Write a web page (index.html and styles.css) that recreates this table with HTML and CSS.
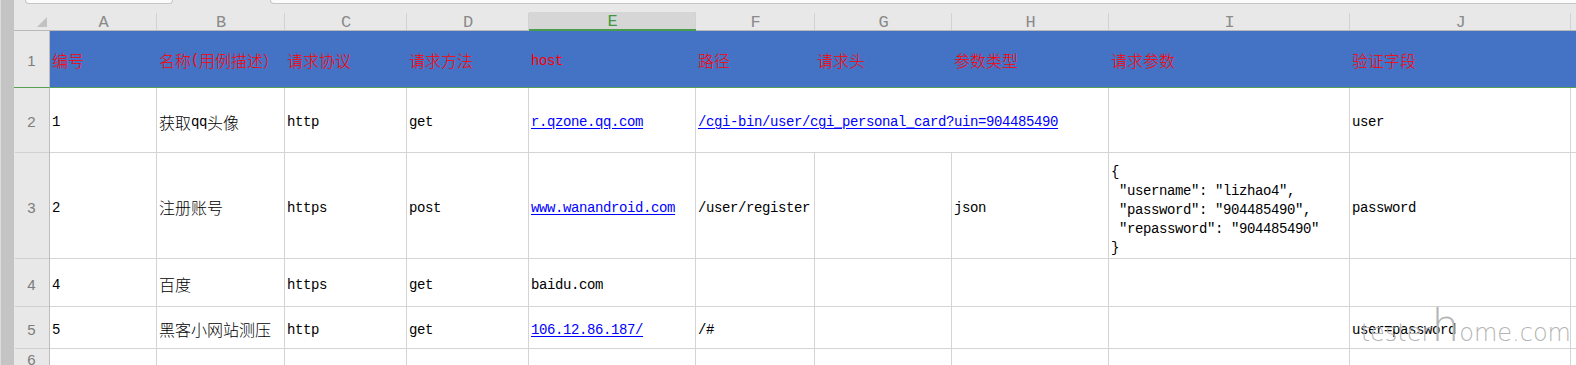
FILE: index.html
```html
<!DOCTYPE html>
<html lang="zh-CN">
<head>
<meta charset="utf-8">
<title>接口用例表</title>
<link rel="stylesheet" href="styles.css">
</head>
<body>
<div class="app">
  <div class="strip"></div>
  <div class="main">
    <div class="topbar"><div class="box b1"></div><div class="box b2"></div></div>
    <div class="sheet">
      <!-- column headers -->
      <div class="ch corner"><svg width="10" height="10" viewBox="0 0 10 10"><polygon points="10,0 10,10 0,10" fill="#c2c2c2"/></svg></div>
      <div class="ch">A</div>
      <div class="ch">B</div>
      <div class="ch">C</div>
      <div class="ch">D</div>
      <div class="ch sel">E</div>
      <div class="ch">F</div>
      <div class="ch">G</div>
      <div class="ch">H</div>
      <div class="ch">I</div>
      <div class="ch">J</div>
      <div class="ch"></div>

      <!-- row 1 -->
      <div class="rh r1">1</div>
      <div class="hd">编号</div>
      <div class="hd">名称<span class="m">(</span>用例描述）</div>
      <div class="hd">请求协议</div>
      <div class="hd">请求方法</div>
      <div class="hd m">host</div>
      <div class="hd">路径</div>
      <div class="hd">请求头</div>
      <div class="hd">参数类型</div>
      <div class="hd">请求参数</div>
      <div class="hd">验证字段</div>
      <div class="hd"></div>

      <!-- row 2 -->
      <div class="rh">2</div>
      <div class="c m">1</div>
      <div class="c">获取<span class="m">qq</span>头像</div>
      <div class="c m">http</div>
      <div class="c m">get</div>
      <div class="c m"><a class="lk">r.qzone.qq.com</a></div>
      <div class="c m span3"><a class="lk">/cgi-bin/user/cgi_personal_card?uin=904485490</a></div>
      <div class="c"></div>
      <div class="c m">user</div>
      <div class="c last"></div>

      <!-- row 3 -->
      <div class="rh">3</div>
      <div class="c m">2</div>
      <div class="c">注册账号</div>
      <div class="c m">https</div>
      <div class="c m">post</div>
      <div class="c m"><a class="lk">www.wanandroid.com</a></div>
      <div class="c m">/user/register</div>
      <div class="c"></div>
      <div class="c m">json</div>
      <div class="c m json">{
 "username": "lizhao4",
 "password": "904485490",
 "repassword": "904485490"
}</div>
      <div class="c m">password</div>
      <div class="c last"></div>

      <!-- row 4 -->
      <div class="rh">4</div>
      <div class="c m">4</div>
      <div class="c">百度</div>
      <div class="c m">https</div>
      <div class="c m">get</div>
      <div class="c m">baidu.com</div>
      <div class="c"></div>
      <div class="c"></div>
      <div class="c"></div>
      <div class="c"></div>
      <div class="c"></div>
      <div class="c last"></div>

      <!-- row 5 -->
      <div class="rh">5</div>
      <div class="c m">5</div>
      <div class="c">黑客小网站测压</div>
      <div class="c m">http</div>
      <div class="c m">get</div>
      <div class="c m"><a class="lk">106.12.86.187/</a></div>
      <div class="c m">/#</div>
      <div class="c"></div>
      <div class="c"></div>
      <div class="c"></div>
      <div class="c m">user=password</div>
      <div class="c last"></div>

      <!-- row 6 -->
      <div class="rh">6</div>
      <div class="c"></div>
      <div class="c"></div>
      <div class="c"></div>
      <div class="c"></div>
      <div class="c"></div>
      <div class="c"></div>
      <div class="c"></div>
      <div class="c"></div>
      <div class="c"></div>
      <div class="c"></div>
      <div class="c last"></div>
    </div>
  </div>
  <div class="wm">tester<span class="wm-h">h</span>ome.com</div>
</div>
</body>
</html>
```
FILE: styles.css
```css
html, body {
  margin: 0;
  padding: 0;
  background: #ffffff;
}

.app {
  position: relative;
  display: flex;
  width: 1576px;
  height: 365px;
  overflow: hidden;
  background: #ffffff;
  font-family: "Noto Sans CJK SC", sans-serif;
  font-size: 16px;
  color: #000000;
}

.strip {
  flex: none;
  width: 14px;
  box-sizing: border-box;
  background: #c4c4c4;
  border-left: 1px solid #dcdcdc;
}

.main {
  flex: 1;
  min-width: 0;
  overflow: hidden;
}

.topbar {
  display: flex;
  height: 4px;
  background: #e8e8e8;
}

.box {
  height: 4px;
  box-sizing: border-box;
  background: #fbfbfb;
  border: 1px solid #c6c6c6;
  border-top: none;
  border-radius: 0 0 5px 5px;
}

.b1 {
  margin-left: 11px;
  width: 148px;
}

.b2 {
  margin-left: 97px;
  flex: 1;
  margin-right: -10px;
}

.sheet {
  display: grid;
  grid-template-columns: 36px 107px 128px 122px 122px 167px 119px 137px 157px 241px 221px 100px;
  grid-template-rows: 27px 57px 65px 106px 48px 42px 19px;
}

.sheet > div {
  box-sizing: border-box;
  min-width: 0;
  white-space: nowrap;
}

/* column headers */
.ch {
  display: flex;
  align-items: flex-end;
  justify-content: center;
  padding-bottom: 0;
  background:
    linear-gradient(#d2d2d2, #d2d2d2) right bottom / 1px 17px no-repeat,
    #e8e8e8;
  border-bottom: 1px solid #b9b9b9;
  font-family: "Liberation Mono", monospace;
  font-size: 17px;
  line-height: 15px;
  color: #8a8a8a;
}

.ch.corner {
  justify-content: flex-end;
  align-items: flex-end;
  padding: 0 3px 3px 0;
  background: #e8e8e8;
}

.ch.corner svg {
  display: block;
}

.ch.sel {
  background:
    linear-gradient(#d2d2d2, #d2d2d2) right bottom / 1px 17px no-repeat,
    linear-gradient(#d6d6d6, #d6d6d6) left bottom / 100% 17px no-repeat,
    #e8e8e8;
  border-bottom: 2px solid #4a9d4a;
  color: #3f9a3f;
}

/* row headers */
.rh {
  display: flex;
  align-items: center;
  justify-content: center;
  padding-top: 2px;
  background:
    linear-gradient(#d0d0d0, #d0d0d0) right bottom / 34px 1px no-repeat,
    #e8e8e8;
  border-right: 1px solid #bdbdbd;
  font-family: "Liberation Sans", sans-serif;
  font-size: 15px;
  color: #7c7c7c;
}

.rh.r1 {
  background: #e8e8e8;
  border-bottom: 1px solid #55a055;
}

/* header row */
.hd {
  display: flex;
  align-items: center;
  padding-left: 2px;
  padding-top: 2px;
  background: #4472c4;
  border-bottom: 1px solid #55a055;
  color: #ff0000;
  font-weight: 300;
}

.hd.m {
  padding-top: 4px;
}

/* body cells */
.c {
  display: flex;
  align-items: center;
  padding-left: 2px;
  padding-top: 3px;
  border-right: 1px solid #d4d4d4;
  border-bottom: 1px solid #d4d4d4;
  font-weight: 300;
}

.c.m {
  padding-top: 4px;
}

.c.last {
  border-right: none;
}

.span3 {
  grid-column: span 3;
}

.m {
  font-family: "Liberation Mono", monospace;
  font-weight: 400;
  font-size: 14px;
  line-height: 16px;
  letter-spacing: -0.4px;
}

.lk {
  color: #0000ff;
  text-decoration: underline;
  text-underline-offset: 2px;
}

.sheet > .json {
  white-space: pre;
  line-height: 19px;
  padding-top: 10px;
}

/* watermark overlay */
.wm {
  position: absolute;
  right: 5px;
  bottom: 17px;
  font-family: "DejaVu Sans", sans-serif;
  font-weight: 200;
  font-size: 24px;
  line-height: 1;
  color: #b4b4b4;
  pointer-events: none;
}

.wm-h {
  font-size: 44px;
}
```
